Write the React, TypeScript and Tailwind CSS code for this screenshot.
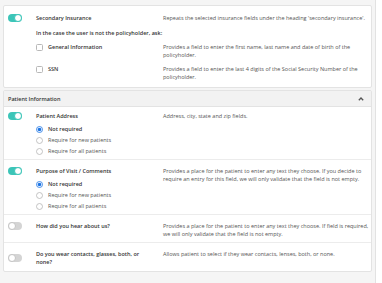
const FONT = "font-['Open_Sans',sans-serif]";

function Toggle({ on }: { on: boolean }) {
  return on ? (
    <div className="relative h-[8px] w-[14px] rounded-full bg-[#3cc5b8]">
      <div className="absolute right-0 top-0 h-[8px] w-[8px] rounded-full border border-[#3cc5b8] bg-white" />
    </div>
  ) : (
    <div className="relative h-[8px] w-[14px] rounded-full bg-[#d4d4d4]">
      <div className="absolute left-0 top-0 h-[8px] w-[8px] rounded-full border border-[#c4c4c4] bg-white" />
    </div>
  );
}

function Radio({ checked }: { checked?: boolean }) {
  return (
    <svg width="7" height="7" viewBox="0 0 7 7" className="shrink-0">
      <circle cx="3.5" cy="3.5" r="3" fill="#fff" stroke={checked ? "#1b74e4" : "#b5b5b5"} strokeWidth="0.8" />
      {checked && <circle cx="3.5" cy="3.5" r="1.8" fill="#1b74e4" />}
    </svg>
  );
}

function Checkbox() {
  return <div className="h-[7px] w-[7px] shrink-0 rounded-[1.5px] border border-[#b8b8b8] bg-white" />;
}

function RadioGroup() {
  const opts = ["Not required", "Require for new patients", "Require for all patients"];
  return (
    <div className="mt-[5px] flex flex-col gap-[3px] pl-[32px]">
      {opts.map((o, i) => (
        <div key={o} className="flex h-[8px] items-center">
          <Radio checked={i === 0} />
          <span className={`ml-[5px] ${i === 0 ? "font-semibold text-[#333]" : "text-[#555]"}`}>{o}</span>
        </div>
      ))}
    </div>
  );
}

function FieldRow({
  title,
  desc,
  on,
  children,
  className,
}: {
  title: string;
  desc: string;
  on: boolean;
  children?: React.ReactNode;
  className?: string;
}) {
  return (
    <div className={`flex items-start ${className ?? ""}`}>
      <div className="w-[159px] shrink-0">
        <div className="flex items-center">
          <div className="w-[32px] shrink-0 pl-[4px]">
            <Toggle on={on} />
          </div>
          <div className="w-[127px] pr-[8px] font-semibold text-[#333]">{title}</div>
        </div>
        {children}
      </div>
      <div className="flex-1 pr-[1px] text-[#555]">{desc}</div>
    </div>
  );
}

export default function App() {
  return (
    <div className={`${FONT} h-[283px] w-[382px] overflow-hidden bg-white text-[5.5px] leading-[8px]`}>
      <div className="h-full w-[376px] border-r border-[#e2e2e2] bg-[#f5f5f5] px-[3px] pt-[5px]">
        {/* Secondary insurance card */}
        <div className="h-[83px] rounded-[2px] border border-[#e3e3e3] bg-white pt-[8px]">
          <FieldRow
            on
            title="Secondary Insurance"
            desc="Repeats the selected insurance fields under the heading 'secondary insurance'."
          />
          <div className="pl-[32px]">
            <div className="mt-[7px] font-semibold text-[#333]">In the case the user is not the policyholder, ask:</div>
            <div className="mt-[6px] flex">
              <div className="flex w-[127px] shrink-0 items-start">
                <div className="mt-[0.5px]"><Checkbox /></div>
                <span className="ml-[5px] font-semibold text-[#333]">General Information</span>
              </div>
              <div className="flex-1 pr-[1px] text-[#555]">
                Provides a field to enter the first name, last name and date of birth of the policyholder.
              </div>
            </div>
            <div className="mt-[6px] flex">
              <div className="flex w-[127px] shrink-0 items-start">
                <div className="mt-[0.5px]"><Checkbox /></div>
                <span className="ml-[5px] font-semibold text-[#333]">SSN</span>
              </div>
              <div className="flex-1 pr-[1px] text-[#555]">
                Provides a field to enter the last 4 digits of the Social Security Number of the policyholder.
              </div>
            </div>
          </div>
        </div>

        {/* Patient information card */}
        <div className="mt-[2px] rounded-[2px] border border-[#e3e3e3] bg-white">
          <div className="flex h-[16px] items-center justify-between border-b border-[#e3e3e3] bg-[#f2f2f2] px-[4px]">
            <span className="font-semibold text-[#333]">Patient Information</span>
            <svg width="6" height="4" viewBox="0 0 6 4" className="mr-[3px]">
              <path d="M0.8 3.3 L3 1 L5.2 3.3" fill="none" stroke="#555" strokeWidth="1.3" />
            </svg>
          </div>
          <FieldRow
            on
            className="border-b border-[#ececec] pb-[4px] pt-[5px]"
            title="Patient Address"
            desc="Address, city, state and zip fields."
          >
            <RadioGroup />
          </FieldRow>
          <FieldRow
            on
            className="border-b border-[#ececec] pb-[4px] pt-[7px]"
            title="Purpose of Visit / Comments"
            desc="Provides a place for the patient to enter any text they choose. If you decide to require an entry for this field, we will only validate that the field is not empty."
          >
            <RadioGroup />
          </FieldRow>
          <FieldRow
            on={false}
            className="border-b border-[#ececec] pb-[4px] pt-[7px]"
            title="How did you hear about us?"
            desc="Provides a place for the patient to enter any text they choose. If field is required, we will only validate that the field is not empty."
          />
          <FieldRow
            on={false}
            className="pb-[5px] pt-[7px]"
            title="Do you wear contacts, glasses, both, or none?"
            desc="Allows patient to select if they wear contacts, lenses, both, or none."
          />
        </div>
      </div>
    </div>
  );
}
